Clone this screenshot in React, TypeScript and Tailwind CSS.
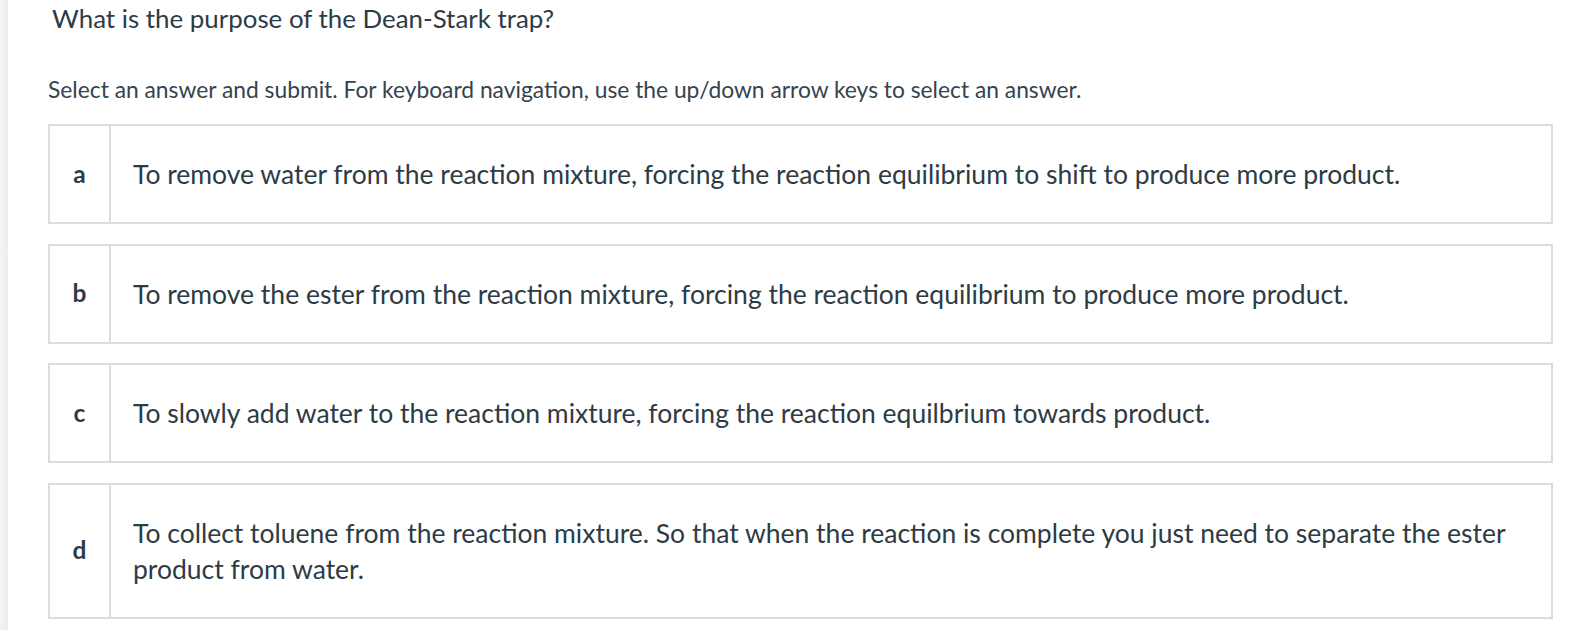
import React from "react";

const options = [
  { key: "a", text: "To remove water from the reaction mixture, forcing the reaction equilibrium to shift to produce more product." },
  { key: "b", text: "To remove the ester from the reaction mixture, forcing the reaction equilibrium to produce more product." },
  { key: "c", text: "To slowly add water to the reaction mixture, forcing the reaction equilbrium towards product." },
  { key: "d", text: "To collect toluene from the reaction mixture. So that when the reaction is complete you just need to separate the ester product from water." },
];

export default function App() {
  return (
    <div
      className="flex w-[1580px] h-[630px] bg-white text-[#2d3b45] overflow-hidden"
      style={{ fontFamily: "Lato, 'Open Sans', sans-serif" }}
    >
      <div className="w-[8px] shrink-0 bg-gradient-to-r from-[#f4f4f4] to-[#ececec]" />
      <div className="flex flex-col pl-[40px] w-[1545px] shrink-0">
        <h1 className="pl-[4px] pt-[2px] text-[25.9px] leading-[32px] font-normal">
          What is the purpose of the Dean-Stark trap?
        </h1>
        <p className="mt-[40px] text-[22.8px] leading-[30px] text-[#34434e]">
          Select an answer and submit. For keyboard navigation, use the up/down arrow keys to select an answer.
        </p>
        <div className="mt-[20px] flex flex-col gap-[19.6px]">
          {options.map((o) => (
            <div key={o.key} className="flex border-2 border-[#d9dde1] bg-white">
              <div className="w-[61px] shrink-0 flex items-center justify-center border-r-2 border-[#d9dde1] text-[24.5px] font-bold">
                {o.key}
              </div>
              <div className="py-[30px] pl-[22px] pr-[40px] text-[26.5px] leading-[36px]">
                {o.text}
              </div>
            </div>
          ))}
        </div>
      </div>
    </div>
  );
}
